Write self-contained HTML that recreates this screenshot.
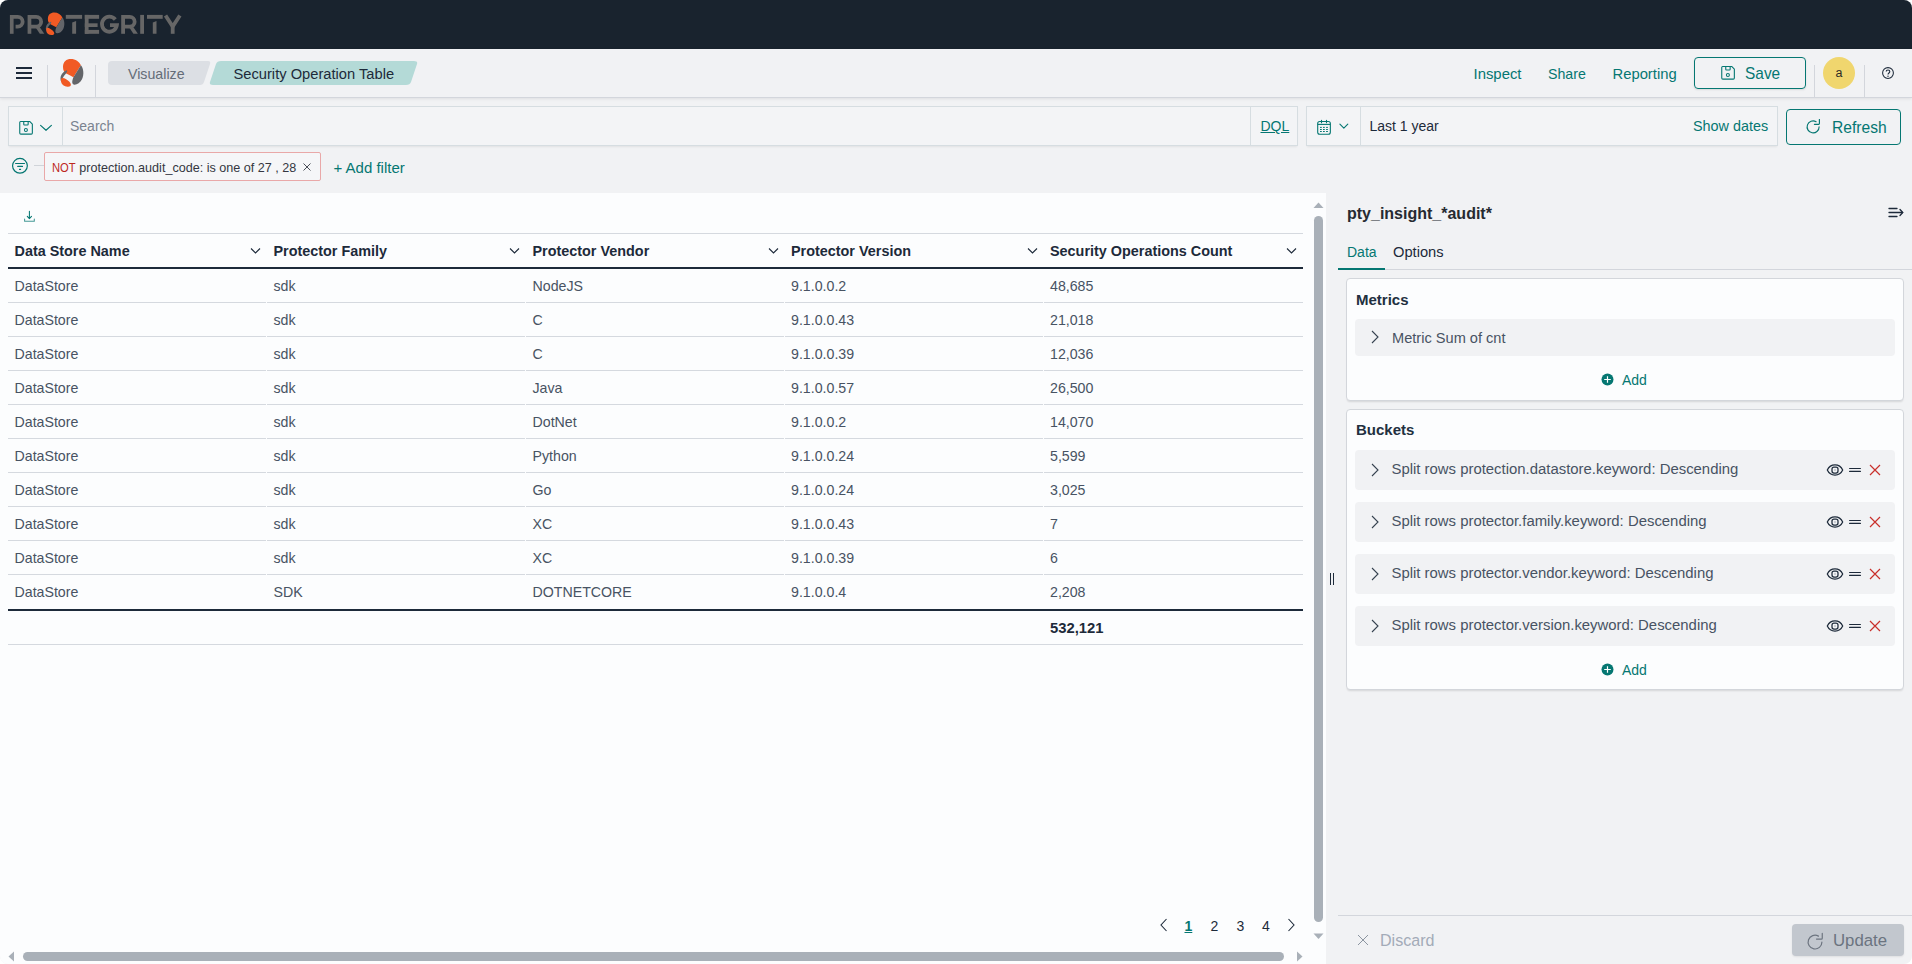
<!DOCTYPE html>
<html><head><meta charset="utf-8"><title>Security Operation Table</title>
<style>
html,body{margin:0;padding:0;}
body{width:1912px;height:964px;overflow:hidden;position:relative;background:#fff;font-family:"Liberation Sans",sans-serif;}
#w{position:absolute;left:0;top:0;width:1912px;height:964px;overflow:hidden;border-radius:8px;background:#f1f2f4;}
#ring{position:absolute;left:0;top:-20px;width:1912px;height:984px;border-radius:0 0 9px 9px;box-shadow:0 0 2px 1px rgba(0,0,0,0.22);pointer-events:none;}
.t{position:absolute;white-space:nowrap;line-height:1;}
svg{display:block;}
</style></head><body><div id="w">
<div style="position:absolute;left:0px;top:0px;width:1912px;height:49px;background:#19232e"></div>
<svg style="position:absolute;left:0px;top:0px;" width="200" height="49" viewBox="0 0 200 49"><g fill="#666666">
<rect x="9.9" y="15" width="3.7" height="18.8"/>
<rect x="27.6" y="15" width="3.7" height="18.8"/>
<rect x="65.8" y="14.9" width="16.3" height="3.9"/>
<path d="M72.2 22.6 L76.1 20.9 V33.8 H72.2Z"/>
<rect x="84.8" y="14.9" width="3.8" height="18.9"/>
<rect x="84.8" y="14.9" width="14.3" height="3.9"/>
<rect x="84.8" y="23.3" width="12.8" height="3.7"/>
<rect x="84.8" y="29.9" width="14.3" height="3.9"/>
<rect x="121.2" y="15" width="3.8" height="18.8"/>
<rect x="140.2" y="14.9" width="3.8" height="18.9"/>
<rect x="147" y="14.9" width="15.7" height="3.9"/>
<path d="M152.8 22.6 L156.5 20.9 V33.8 H152.8Z"/>
<rect x="170.8" y="25" width="3.8" height="8.8"/>
<path d="M35 26.5 H39.3 L44.3 33.8 H39.8Z"/>
<path d="M128.6 26.5 H132.9 L137.9 33.8 H133.4Z"/>
</g>
<g fill="none" stroke="#666666" stroke-width="3.8">
<path d="M11.7 16.9 H17.8 A4.85 4.85 0 0 1 17.8 26.6 H15.6"/>
<path d="M29.5 16.9 H36.3 A4.85 4.85 0 0 1 36.3 26.6 H31"/>
<path d="M123 16.9 H129.8 A4.85 4.85 0 0 1 129.8 26.6 H124.5"/>
<path d="M115.3 19.5 A7.5 7.5 0 1 0 116.9 25.1 H110"/>
<path d="M165.5 15.5 L172.7 26.5 L179.9 15.5" stroke-linejoin="miter"/>
</g>
<g transform="translate(42.2 10.1) scale(0.81)"><path d="M7 11 C7 5.5 10.5 3 14.8 3 C19.5 3 23.3 5.6 24.9 9.2 L17.4 21.2 C15 19.8 12.5 18.8 10.2 17.6 C8.2 16.4 7 14.2 7 11Z" fill="#f15a24"/>
<path d="M24.9 9.2 C27.6 12.2 28.3 18.5 26 23.3 C24.3 26.8 21 28.8 18.4 28.7 C16.3 28.5 15.9 26.4 16.4 24.5 C16.7 23.3 17 22.2 17.4 21.2Z" fill="#636569"/>
<path d="M11 14.3 C11.6 15.3 10.8 16.6 9.4 18.2 C7.6 20.2 6 22.8 5.3 25.8 C4.3 24.2 4.1 21.4 5.3 19 C6.6 16.5 9.3 14.3 11 14.3Z" fill="#636569"/>
<path d="M5.6 22.2 C6.7 21.6 8.2 21.9 9.8 23 C12.3 24.6 14.7 26.2 14.9 28.6 C15 30.3 13.5 31 11.4 30.8 C8.2 30.5 5.6 28.6 5.1 26 C4.8 24.4 5 22.7 5.6 22.2Z" fill="#f15a24"/></g>
</svg></svg>
<div style="position:absolute;left:0px;top:49px;width:1912px;height:48px;background:#f1f2f4;border-bottom:1px solid #d3d6dc;box-shadow:0 1px 3px rgba(0,0,0,0.08)"></div>
<div style="position:absolute;left:16px;top:67px;width:16px;height:2px;background:#1d2a3a"></div>
<div style="position:absolute;left:16px;top:72px;width:16px;height:2px;background:#1d2a3a"></div>
<div style="position:absolute;left:16px;top:77px;width:16px;height:2px;background:#1d2a3a"></div>
<div style="position:absolute;left:47px;top:65px;width:1px;height:32px;background:#d3d6dc"></div>
<div style="position:absolute;left:95px;top:65px;width:1px;height:32px;background:#d3d6dc"></div>
<svg style="position:absolute;left:56px;top:56px;" width="32" height="34" viewBox="0 0 32 34"><path d="M7 11 C7 5.5 10.5 3 14.8 3 C19.5 3 23.3 5.6 24.9 9.2 L17.4 21.2 C15 19.8 12.5 18.8 10.2 17.6 C8.2 16.4 7 14.2 7 11Z" fill="#f15a24"/>
<path d="M24.9 9.2 C27.6 12.2 28.3 18.5 26 23.3 C24.3 26.8 21 28.8 18.4 28.7 C16.3 28.5 15.9 26.4 16.4 24.5 C16.7 23.3 17 22.2 17.4 21.2Z" fill="#636569"/>
<path d="M11 14.3 C11.6 15.3 10.8 16.6 9.4 18.2 C7.6 20.2 6 22.8 5.3 25.8 C4.3 24.2 4.1 21.4 5.3 19 C6.6 16.5 9.3 14.3 11 14.3Z" fill="#636569"/>
<path d="M5.6 22.2 C6.7 21.6 8.2 21.9 9.8 23 C12.3 24.6 14.7 26.2 14.9 28.6 C15 30.3 13.5 31 11.4 30.8 C8.2 30.5 5.6 28.6 5.1 26 C4.8 24.4 5 22.7 5.6 22.2Z" fill="#f15a24"/></svg>
<svg style="position:absolute;left:108px;top:61px;" width="103" height="24" viewBox="0 0 103 24"><path d="M4 0 H100 Q103 0 102 3 L96 21 Q95 24 92 24 H4 Q0 24 0 20 V4 Q0 0 4 0Z" fill="#dcdfe4"/></svg>
<div class="t" style="left:128.0px;top:66.8px;font-size:14.2px;color:#646c78;font-weight:400;">Visualize</div>
<svg style="position:absolute;left:209px;top:61px;" width="210" height="24" viewBox="0 0 210 24"><path d="M12 0 H205 Q209 0 208 3 L202 21 Q201 24 197 24 H4 Q0 24 1 21 L7 3 Q8 0 12 0Z" fill="#b4dad7"/></svg>
<div class="t" style="left:233.5px;top:66.6px;font-size:14.7px;color:#1d2a3a;font-weight:400;">Security Operation Table</div>
<div class="t" style="left:1473.5px;top:67.1px;font-size:14.9px;color:#057772;font-weight:400;">Inspect</div>
<div class="t" style="left:1548.0px;top:67.0px;font-size:14.2px;color:#057772;font-weight:400;">Share</div>
<div class="t" style="left:1612.5px;top:66.5px;font-size:14.8px;color:#057772;font-weight:400;">Reporting</div>
<div style="position:absolute;left:1694px;top:57px;width:112px;height:32px;box-sizing:border-box;border:1.5px solid #057772;border-radius:4px;box-shadow:0 1px 2px rgba(0,0,0,0.1)"></div>
<svg style="position:absolute;left:1720px;top:65px;" width="16" height="16" viewBox="0 0 16 16"><path d="M2.6 1.55 H11.9 L14.35 4.1 V13.1 Q14.35 14.15 13.3 14.15 H2.8 Q1.75 14.15 1.75 13.1 V2.6 Q1.75 1.55 2.6 1.55Z M5.75 1.55 V4.3 Q5.75 5.05 6.5 5.05 H9.4 Q10.15 5.05 10.15 4.3 V1.55" fill="none" stroke="#057772" stroke-width="1.1" stroke-linejoin="round"/><circle cx="7.9" cy="9.9" r="1.5" fill="none" stroke="#057772" stroke-width="1.05"/></svg>
<div class="t" style="left:1744.5px;top:65.5px;font-size:16.6px;color:#057772;font-weight:400;transform:scaleX(0.93);transform-origin:0 0;">Save</div>
<div style="position:absolute;left:1814px;top:65px;width:1px;height:32px;background:#d3d6dc"></div>
<div style="position:absolute;left:1823px;top:57px;width:32px;height:32px;background:#f0d66e;border-radius:50%"></div>
<div class="t" style="left:1835.5px;top:67.4px;font-size:12.5px;color:#2b2b26;font-weight:400;">a</div>
<div style="position:absolute;left:1864px;top:65px;width:1px;height:32px;background:#d3d6dc"></div>
<svg style="position:absolute;left:1881px;top:66px;" width="14" height="14" viewBox="0 0 14 14"><circle cx="7" cy="7" r="5.4" fill="none" stroke="#1d2a3a" stroke-width="1.05"/><path d="M5.2 5.6 C5.2 3.4 8.8 3.4 8.8 5.6 C8.8 7 7 7 7 8.6" fill="none" stroke="#1d2a3a" stroke-width="1.1"/><circle cx="7" cy="10.3" r="0.7" fill="#1d2a3a"/></svg>
<div style="position:absolute;left:8px;top:106px;width:1290px;height:40px;box-sizing:border-box;background:#f3f4f6;border:1px solid #d6dde1;box-shadow:0 2px 2px -1px rgba(0,0,0,0.07)"></div>
<div style="position:absolute;left:62px;top:107px;width:1px;height:38px;background:#d6dde1"></div>
<svg style="position:absolute;left:18px;top:120px;" width="16" height="16" viewBox="0 0 16 16"><path d="M2.6 1.55 H11.9 L14.35 4.1 V13.1 Q14.35 14.15 13.3 14.15 H2.8 Q1.75 14.15 1.75 13.1 V2.6 Q1.75 1.55 2.6 1.55Z M5.75 1.55 V4.3 Q5.75 5.05 6.5 5.05 H9.4 Q10.15 5.05 10.15 4.3 V1.55" fill="none" stroke="#057772" stroke-width="1.1" stroke-linejoin="round"/><circle cx="7.9" cy="9.9" r="1.5" fill="none" stroke="#057772" stroke-width="1.05"/></svg>
<svg style="position:absolute;left:39px;top:123px;" width="14" height="10" viewBox="0 0 14 10"><path d="M1.6 2.4 L7 7.3 L12.4 2.4" fill="none" stroke="#057772" stroke-width="1.15" stroke-linecap="round" stroke-linejoin="round"/></svg>
<div class="t" style="left:70.0px;top:119.1px;font-size:14px;color:#7a8390;font-weight:400;">Search</div>
<div style="position:absolute;left:1250px;top:107px;width:1px;height:38px;background:#d6dde1"></div>
<div class="t" style="left:1260.5px;top:118.9px;font-size:14px;color:#057772;font-weight:400;text-decoration:underline;">DQL</div>
<div style="position:absolute;left:1306px;top:106px;width:472px;height:40px;box-sizing:border-box;background:#f3f4f6;border:1px solid #d6dde1;box-shadow:0 2px 2px -1px rgba(0,0,0,0.07)"></div>
<div style="position:absolute;left:1360px;top:107px;width:1px;height:38px;background:#d6dde1"></div>
<svg style="position:absolute;left:1316px;top:119px;" width="16" height="17" viewBox="0 0 16 17"><rect x="1.7" y="2.45" width="12.65" height="12.8" rx="2" fill="none" stroke="#057772" stroke-width="1.1"/><path d="M1.7 5.4 H14.35" stroke="#057772" stroke-width="1.1"/><path d="M5.5 1.2 V3.7 M10.5 1.2 V3.7" stroke="#057772" stroke-width="1.1" stroke-linecap="round"/><path d="M4.4 8.4 H5.4 M7.4 8.4 H8.4 M10.5 8.4 H11.5 M4.4 10.5 H5.4 M7.4 10.5 H8.4 M10.5 10.5 H11.5 M4.4 12.5 H5.4 M7.4 12.5 H8.4 M10.5 12.5 H11.5" stroke="#057772" stroke-width="1" stroke-linecap="round"/></svg>
<svg style="position:absolute;left:1338px;top:122px;" width="12" height="8" viewBox="0 0 12 8"><path d="M1.9 2.2 L5.85 6.1 L9.8 2.2" fill="none" stroke="#057772" stroke-width="1.1" stroke-linecap="round" stroke-linejoin="round"/></svg>
<div class="t" style="left:1369.5px;top:118.9px;font-size:14px;color:#1d2a3a;font-weight:400;">Last 1 year</div>
<div class="t" style="left:1693.0px;top:118.6px;font-size:14.4px;color:#057772;font-weight:400;">Show dates</div>
<div style="position:absolute;left:1786px;top:109px;width:115px;height:36px;box-sizing:border-box;border:1.5px solid #057772;border-radius:4px"></div>
<svg style="position:absolute;left:1805px;top:119px;" width="17" height="17" viewBox="0 0 17 17"><path d="M11.1 2.7 A6 6 0 1 0 14.1 7.9" fill="none" stroke="#057772" stroke-width="1.15" stroke-linecap="round"/><path d="M14.4 0.4 V4.5 Q14.4 5.3 13.6 5.3 H9.4" fill="none" stroke="#057772" stroke-width="1.15" stroke-linecap="round"/></svg>
<div class="t" style="left:1832.0px;top:119.6px;font-size:16.6px;color:#057772;font-weight:400;transform:scaleX(0.94);transform-origin:0 0;">Refresh</div>
<svg style="position:absolute;left:11px;top:157px;" width="18" height="18" viewBox="0 0 18 18"><circle cx="8.95" cy="8.8" r="7.4" fill="none" stroke="#057772" stroke-width="1.2"/><path d="M4.6 6.5 H13.5 M6.7 9.4 H11.5 M8.5 12.4 H9.6" stroke="#057772" stroke-width="1.1" stroke-linecap="round"/></svg>
<div style="position:absolute;left:34px;top:165px;width:10px;height:1px;background:#d0d4d9"></div>
<div style="position:absolute;left:44px;top:152px;width:277px;height:29px;box-sizing:border-box;background:#f5f6f8;border:1px solid #e9a8a8;border-radius:2px"></div>
<div class="t" style="left:52.0px;top:160.8px;font-size:13px;color:#bd271e;font-weight:400;transform:scaleX(0.86);transform-origin:0 0;">NOT</div>
<div class="t" style="left:79.3px;top:161.8px;font-size:12.6px;color:#343741;font-weight:400;">protection.audit_code: is one of 27 , 28</div>
<svg style="position:absolute;left:301px;top:161px;" width="12" height="12" viewBox="0 0 12 12"><path d="M2.5 2.5 L9.5 9.5 M9.5 2.5 L2.5 9.5" stroke="#4a4f58" stroke-width="1"/></svg>
<div class="t" style="left:333.5px;top:159.7px;font-size:15px;color:#057772;font-weight:400;">+ Add filter</div>
<div style="position:absolute;left:0px;top:193px;width:1326px;height:771px;background:#fcfdfe"></div>
<svg style="position:absolute;left:22px;top:210px;" width="14" height="14" viewBox="0 0 14 14"><path d="M7.4 1.2 V8.6 M5.3 6.4 L7.4 8.6 L9.5 6.4" fill="none" stroke="#057772" stroke-width="1.05" stroke-linecap="round" stroke-linejoin="round"/><path d="M2.6 9 V11.3 H12.3 V9" fill="none" stroke="#057772" stroke-width="1.05" stroke-opacity="0.75" stroke-linecap="round" stroke-linejoin="round"/></svg>
<div style="position:absolute;left:8px;top:233px;width:1295px;height:1px;background:#d5d9df"></div>
<div class="t" style="left:14.5px;top:243.8px;font-size:14.4px;color:#1d2a3a;font-weight:700;">Data Store Name</div>
<div class="t" style="left:273.5px;top:243.8px;font-size:14.4px;color:#1d2a3a;font-weight:700;">Protector Family</div>
<div class="t" style="left:532.5px;top:243.8px;font-size:14.4px;color:#1d2a3a;font-weight:700;">Protector Vendor</div>
<div class="t" style="left:791.0px;top:243.8px;font-size:14.4px;color:#1d2a3a;font-weight:700;">Protector Version</div>
<div class="t" style="left:1050.0px;top:243.8px;font-size:14.4px;color:#1d2a3a;font-weight:700;">Security Operations Count</div>
<svg style="position:absolute;left:250px;top:247px;" width="11" height="8" viewBox="0 0 11 8"><path d="M1 1.5 L5.5 6 L10 1.5" fill="none" stroke="#1d2a3a" stroke-width="1.1"/></svg>
<svg style="position:absolute;left:509px;top:247px;" width="11" height="8" viewBox="0 0 11 8"><path d="M1 1.5 L5.5 6 L10 1.5" fill="none" stroke="#1d2a3a" stroke-width="1.1"/></svg>
<svg style="position:absolute;left:768px;top:247px;" width="11" height="8" viewBox="0 0 11 8"><path d="M1 1.5 L5.5 6 L10 1.5" fill="none" stroke="#1d2a3a" stroke-width="1.1"/></svg>
<svg style="position:absolute;left:1027px;top:247px;" width="11" height="8" viewBox="0 0 11 8"><path d="M1 1.5 L5.5 6 L10 1.5" fill="none" stroke="#1d2a3a" stroke-width="1.1"/></svg>
<svg style="position:absolute;left:1286px;top:247px;" width="11" height="8" viewBox="0 0 11 8"><path d="M1 1.5 L5.5 6 L10 1.5" fill="none" stroke="#1d2a3a" stroke-width="1.1"/></svg>
<div style="position:absolute;left:8px;top:267px;width:1295px;height:2px;background:#1d2a3a"></div>
<div class="t" style="left:14.5px;top:279.0px;font-size:14.2px;color:#485363;font-weight:400;">DataStore</div>
<div class="t" style="left:273.5px;top:279.0px;font-size:14.2px;color:#485363;font-weight:400;">sdk</div>
<div class="t" style="left:532.5px;top:279.0px;font-size:14.2px;color:#485363;font-weight:400;">NodeJS</div>
<div class="t" style="left:791.0px;top:279.0px;font-size:14.2px;color:#485363;font-weight:400;">9.1.0.0.2</div>
<div class="t" style="left:1050.0px;top:279.0px;font-size:14.2px;color:#485363;font-weight:400;">48,685</div>
<div style="position:absolute;left:8px;top:302px;width:258px;height:1px;background:#d5d9df"></div>
<div style="position:absolute;left:267px;top:302px;width:258px;height:1px;background:#d5d9df"></div>
<div style="position:absolute;left:526px;top:302px;width:258px;height:1px;background:#d5d9df"></div>
<div style="position:absolute;left:785px;top:302px;width:258px;height:1px;background:#d5d9df"></div>
<div style="position:absolute;left:1044px;top:302px;width:259px;height:1px;background:#d5d9df"></div>
<div class="t" style="left:14.5px;top:313.0px;font-size:14.2px;color:#485363;font-weight:400;">DataStore</div>
<div class="t" style="left:273.5px;top:313.0px;font-size:14.2px;color:#485363;font-weight:400;">sdk</div>
<div class="t" style="left:532.5px;top:313.0px;font-size:14.2px;color:#485363;font-weight:400;">C</div>
<div class="t" style="left:791.0px;top:313.0px;font-size:14.2px;color:#485363;font-weight:400;">9.1.0.0.43</div>
<div class="t" style="left:1050.0px;top:313.0px;font-size:14.2px;color:#485363;font-weight:400;">21,018</div>
<div style="position:absolute;left:8px;top:336px;width:258px;height:1px;background:#d5d9df"></div>
<div style="position:absolute;left:267px;top:336px;width:258px;height:1px;background:#d5d9df"></div>
<div style="position:absolute;left:526px;top:336px;width:258px;height:1px;background:#d5d9df"></div>
<div style="position:absolute;left:785px;top:336px;width:258px;height:1px;background:#d5d9df"></div>
<div style="position:absolute;left:1044px;top:336px;width:259px;height:1px;background:#d5d9df"></div>
<div class="t" style="left:14.5px;top:347.0px;font-size:14.2px;color:#485363;font-weight:400;">DataStore</div>
<div class="t" style="left:273.5px;top:347.0px;font-size:14.2px;color:#485363;font-weight:400;">sdk</div>
<div class="t" style="left:532.5px;top:347.0px;font-size:14.2px;color:#485363;font-weight:400;">C</div>
<div class="t" style="left:791.0px;top:347.0px;font-size:14.2px;color:#485363;font-weight:400;">9.1.0.0.39</div>
<div class="t" style="left:1050.0px;top:347.0px;font-size:14.2px;color:#485363;font-weight:400;">12,036</div>
<div style="position:absolute;left:8px;top:370px;width:258px;height:1px;background:#d5d9df"></div>
<div style="position:absolute;left:267px;top:370px;width:258px;height:1px;background:#d5d9df"></div>
<div style="position:absolute;left:526px;top:370px;width:258px;height:1px;background:#d5d9df"></div>
<div style="position:absolute;left:785px;top:370px;width:258px;height:1px;background:#d5d9df"></div>
<div style="position:absolute;left:1044px;top:370px;width:259px;height:1px;background:#d5d9df"></div>
<div class="t" style="left:14.5px;top:381.0px;font-size:14.2px;color:#485363;font-weight:400;">DataStore</div>
<div class="t" style="left:273.5px;top:381.0px;font-size:14.2px;color:#485363;font-weight:400;">sdk</div>
<div class="t" style="left:532.5px;top:381.0px;font-size:14.2px;color:#485363;font-weight:400;">Java</div>
<div class="t" style="left:791.0px;top:381.0px;font-size:14.2px;color:#485363;font-weight:400;">9.1.0.0.57</div>
<div class="t" style="left:1050.0px;top:381.0px;font-size:14.2px;color:#485363;font-weight:400;">26,500</div>
<div style="position:absolute;left:8px;top:404px;width:258px;height:1px;background:#d5d9df"></div>
<div style="position:absolute;left:267px;top:404px;width:258px;height:1px;background:#d5d9df"></div>
<div style="position:absolute;left:526px;top:404px;width:258px;height:1px;background:#d5d9df"></div>
<div style="position:absolute;left:785px;top:404px;width:258px;height:1px;background:#d5d9df"></div>
<div style="position:absolute;left:1044px;top:404px;width:259px;height:1px;background:#d5d9df"></div>
<div class="t" style="left:14.5px;top:415.0px;font-size:14.2px;color:#485363;font-weight:400;">DataStore</div>
<div class="t" style="left:273.5px;top:415.0px;font-size:14.2px;color:#485363;font-weight:400;">sdk</div>
<div class="t" style="left:532.5px;top:415.0px;font-size:14.2px;color:#485363;font-weight:400;">DotNet</div>
<div class="t" style="left:791.0px;top:415.0px;font-size:14.2px;color:#485363;font-weight:400;">9.1.0.0.2</div>
<div class="t" style="left:1050.0px;top:415.0px;font-size:14.2px;color:#485363;font-weight:400;">14,070</div>
<div style="position:absolute;left:8px;top:438px;width:258px;height:1px;background:#d5d9df"></div>
<div style="position:absolute;left:267px;top:438px;width:258px;height:1px;background:#d5d9df"></div>
<div style="position:absolute;left:526px;top:438px;width:258px;height:1px;background:#d5d9df"></div>
<div style="position:absolute;left:785px;top:438px;width:258px;height:1px;background:#d5d9df"></div>
<div style="position:absolute;left:1044px;top:438px;width:259px;height:1px;background:#d5d9df"></div>
<div class="t" style="left:14.5px;top:449.0px;font-size:14.2px;color:#485363;font-weight:400;">DataStore</div>
<div class="t" style="left:273.5px;top:449.0px;font-size:14.2px;color:#485363;font-weight:400;">sdk</div>
<div class="t" style="left:532.5px;top:449.0px;font-size:14.2px;color:#485363;font-weight:400;">Python</div>
<div class="t" style="left:791.0px;top:449.0px;font-size:14.2px;color:#485363;font-weight:400;">9.1.0.0.24</div>
<div class="t" style="left:1050.0px;top:449.0px;font-size:14.2px;color:#485363;font-weight:400;">5,599</div>
<div style="position:absolute;left:8px;top:472px;width:258px;height:1px;background:#d5d9df"></div>
<div style="position:absolute;left:267px;top:472px;width:258px;height:1px;background:#d5d9df"></div>
<div style="position:absolute;left:526px;top:472px;width:258px;height:1px;background:#d5d9df"></div>
<div style="position:absolute;left:785px;top:472px;width:258px;height:1px;background:#d5d9df"></div>
<div style="position:absolute;left:1044px;top:472px;width:259px;height:1px;background:#d5d9df"></div>
<div class="t" style="left:14.5px;top:483.0px;font-size:14.2px;color:#485363;font-weight:400;">DataStore</div>
<div class="t" style="left:273.5px;top:483.0px;font-size:14.2px;color:#485363;font-weight:400;">sdk</div>
<div class="t" style="left:532.5px;top:483.0px;font-size:14.2px;color:#485363;font-weight:400;">Go</div>
<div class="t" style="left:791.0px;top:483.0px;font-size:14.2px;color:#485363;font-weight:400;">9.1.0.0.24</div>
<div class="t" style="left:1050.0px;top:483.0px;font-size:14.2px;color:#485363;font-weight:400;">3,025</div>
<div style="position:absolute;left:8px;top:506px;width:258px;height:1px;background:#d5d9df"></div>
<div style="position:absolute;left:267px;top:506px;width:258px;height:1px;background:#d5d9df"></div>
<div style="position:absolute;left:526px;top:506px;width:258px;height:1px;background:#d5d9df"></div>
<div style="position:absolute;left:785px;top:506px;width:258px;height:1px;background:#d5d9df"></div>
<div style="position:absolute;left:1044px;top:506px;width:259px;height:1px;background:#d5d9df"></div>
<div class="t" style="left:14.5px;top:517.0px;font-size:14.2px;color:#485363;font-weight:400;">DataStore</div>
<div class="t" style="left:273.5px;top:517.0px;font-size:14.2px;color:#485363;font-weight:400;">sdk</div>
<div class="t" style="left:532.5px;top:517.0px;font-size:14.2px;color:#485363;font-weight:400;">XC</div>
<div class="t" style="left:791.0px;top:517.0px;font-size:14.2px;color:#485363;font-weight:400;">9.1.0.0.43</div>
<div class="t" style="left:1050.0px;top:517.0px;font-size:14.2px;color:#485363;font-weight:400;">7</div>
<div style="position:absolute;left:8px;top:540px;width:258px;height:1px;background:#d5d9df"></div>
<div style="position:absolute;left:267px;top:540px;width:258px;height:1px;background:#d5d9df"></div>
<div style="position:absolute;left:526px;top:540px;width:258px;height:1px;background:#d5d9df"></div>
<div style="position:absolute;left:785px;top:540px;width:258px;height:1px;background:#d5d9df"></div>
<div style="position:absolute;left:1044px;top:540px;width:259px;height:1px;background:#d5d9df"></div>
<div class="t" style="left:14.5px;top:551.0px;font-size:14.2px;color:#485363;font-weight:400;">DataStore</div>
<div class="t" style="left:273.5px;top:551.0px;font-size:14.2px;color:#485363;font-weight:400;">sdk</div>
<div class="t" style="left:532.5px;top:551.0px;font-size:14.2px;color:#485363;font-weight:400;">XC</div>
<div class="t" style="left:791.0px;top:551.0px;font-size:14.2px;color:#485363;font-weight:400;">9.1.0.0.39</div>
<div class="t" style="left:1050.0px;top:551.0px;font-size:14.2px;color:#485363;font-weight:400;">6</div>
<div style="position:absolute;left:8px;top:574px;width:258px;height:1px;background:#d5d9df"></div>
<div style="position:absolute;left:267px;top:574px;width:258px;height:1px;background:#d5d9df"></div>
<div style="position:absolute;left:526px;top:574px;width:258px;height:1px;background:#d5d9df"></div>
<div style="position:absolute;left:785px;top:574px;width:258px;height:1px;background:#d5d9df"></div>
<div style="position:absolute;left:1044px;top:574px;width:259px;height:1px;background:#d5d9df"></div>
<div class="t" style="left:14.5px;top:585.0px;font-size:14.2px;color:#485363;font-weight:400;">DataStore</div>
<div class="t" style="left:273.5px;top:585.0px;font-size:14.2px;color:#485363;font-weight:400;">SDK</div>
<div class="t" style="left:532.5px;top:585.0px;font-size:14.2px;color:#485363;font-weight:400;">DOTNETCORE</div>
<div class="t" style="left:791.0px;top:585.0px;font-size:14.2px;color:#485363;font-weight:400;">9.1.0.0.4</div>
<div class="t" style="left:1050.0px;top:585.0px;font-size:14.2px;color:#485363;font-weight:400;">2,208</div>
<div style="position:absolute;left:8px;top:609px;width:1295px;height:2px;background:#1d2a3a"></div>
<div class="t" style="left:1050.0px;top:620.8px;font-size:14.8px;color:#1d2a3a;font-weight:700;">532,121</div>
<div style="position:absolute;left:8px;top:644px;width:1295px;height:1px;background:#d5d9df"></div>
<svg style="position:absolute;left:1159px;top:917px;" width="10" height="16" viewBox="0 0 10 16"><path d="M7.5 2 L2 8 L7.5 14" fill="none" stroke="#1d2a3a" stroke-width="1.1"/></svg>
<div class="t" style="left:1184.5px;top:918.8px;font-size:14px;color:#057772;font-weight:700;text-decoration:underline;">1</div>
<div class="t" style="left:1210.5px;top:918.8px;font-size:14px;color:#1d2a3a;font-weight:400;">2</div>
<div class="t" style="left:1236.5px;top:918.8px;font-size:14px;color:#1d2a3a;font-weight:400;">3</div>
<div class="t" style="left:1262.0px;top:918.8px;font-size:14px;color:#1d2a3a;font-weight:400;">4</div>
<svg style="position:absolute;left:1286px;top:917px;" width="10" height="16" viewBox="0 0 10 16"><path d="M2.5 2 L8 8 L2.5 14" fill="none" stroke="#1d2a3a" stroke-width="1.1"/></svg>
<svg style="position:absolute;left:1313px;top:202px;" width="11" height="7" viewBox="0 0 11 7"><path d="M0.5 6 L5.5 0.5 L10.5 6Z" fill="#a9b0b8"/></svg>
<div style="position:absolute;left:1314px;top:216px;width:9px;height:706px;background:#a9b0b8;border-radius:4.5px"></div>
<svg style="position:absolute;left:1313px;top:933px;" width="11" height="7" viewBox="0 0 11 7"><path d="M0.5 0.5 L5.5 6 L10.5 0.5Z" fill="#a9b0b8"/></svg>
<svg style="position:absolute;left:8px;top:951px;" width="7" height="11" viewBox="0 0 7 11"><path d="M6 0.5 L0.5 5.5 L6 10.5Z" fill="#a9b0b8"/></svg>
<div style="position:absolute;left:23px;top:952px;width:1261px;height:9px;background:#a9b0b8;border-radius:4.5px"></div>
<svg style="position:absolute;left:1296px;top:951px;" width="7" height="11" viewBox="0 0 7 11"><path d="M1 0.5 L6.5 5.5 L1 10.5Z" fill="#a9b0b8"/></svg>
<div style="position:absolute;left:1330px;top:573px;width:1px;height:12px;background:#1d2a3a"></div>
<div style="position:absolute;left:1333px;top:573px;width:1px;height:12px;background:#1d2a3a"></div>
<div class="t" style="left:1347.0px;top:206.1px;font-size:16px;color:#262a31;font-weight:700;">pty_insight_*audit*</div>
<svg style="position:absolute;left:1886px;top:206px;" width="18" height="13" viewBox="0 0 18 13"><path d="M3 2.5 H11 M3 6.5 H16.5 M3 10.5 H11" stroke="#1d2a3a" stroke-width="1.3" stroke-linecap="round"/><path d="M14 3.5 L16.8 6.5 L14 9.5" fill="none" stroke="#1d2a3a" stroke-width="1.3" stroke-linecap="round"/></svg>
<div class="t" style="left:1347.0px;top:244.8px;font-size:14px;color:#057772;font-weight:400;">Data</div>
<div class="t" style="left:1393.0px;top:245.1px;font-size:14.7px;color:#1d2a3a;font-weight:400;">Options</div>
<div style="position:absolute;left:1338px;top:269px;width:574px;height:1px;background:#d3d6dc"></div>
<div style="position:absolute;left:1338px;top:268px;width:47px;height:2px;background:#057772"></div>
<div style="position:absolute;left:1346px;top:278px;width:558px;height:123px;box-sizing:border-box;background:#fcfdfe;border:1px solid #d3d6db;border-radius:4px;box-shadow:0 2px 2px -1px rgba(0,0,0,0.12)"></div>
<div class="t" style="left:1356.0px;top:291.5px;font-size:15px;color:#223040;font-weight:700;">Metrics</div>
<div style="position:absolute;left:1355px;top:319px;width:540px;height:37px;background:#f1f2f4;border-radius:4px"></div>
<svg style="position:absolute;left:1369px;top:329px;" width="12" height="16" viewBox="0 0 12 16"><path d="M3 2 L9 8 L3 14" fill="none" stroke="#364250" stroke-width="1.1"/></svg>
<div class="t" style="left:1392.0px;top:330.9px;font-size:14.6px;color:#485363;font-weight:400;">Metric Sum of cnt</div>
<svg style="position:absolute;left:1601px;top:373px;" width="13" height="13" viewBox="0 0 13 13"><circle cx="6.5" cy="6.5" r="6" fill="#057772"/><path d="M6.5 3.2 V9.8 M3.2 6.5 H9.8" stroke="#fff" stroke-width="1.2"/></svg>
<div class="t" style="left:1622.0px;top:373.1px;font-size:14px;color:#057772;font-weight:400;">Add</div>
<div style="position:absolute;left:1346px;top:409px;width:558px;height:281px;box-sizing:border-box;background:#fcfdfe;border:1px solid #d3d6db;border-radius:4px;box-shadow:0 2px 2px -1px rgba(0,0,0,0.12)"></div>
<div class="t" style="left:1356.0px;top:422.2px;font-size:15px;color:#223040;font-weight:700;">Buckets</div>
<div style="position:absolute;left:1355px;top:450px;width:540px;height:40px;background:#f1f2f4;border-radius:4px"></div>
<svg style="position:absolute;left:1369px;top:462px;" width="12" height="16" viewBox="0 0 12 16"><path d="M3 2 L9 8 L3 14" fill="none" stroke="#364250" stroke-width="1.1"/></svg>
<div class="t" style="left:1391.5px;top:462.2px;font-size:14.9px;color:#485363;font-weight:400;">Split rows protection.datastore.keyword: Descending</div>
<svg style="position:absolute;left:1826px;top:461px;" width="18" height="18" viewBox="0 0 18 18"><path d="M1.3 9 C4.5 2.2 13.5 2.2 16.7 9 C13.5 15.8 4.5 15.8 1.3 9Z" fill="none" stroke="#1d2a3a" stroke-width="1.25" stroke-linejoin="round"/><rect x="6" y="6" width="6" height="6" rx="2" fill="none" stroke="#1d2a3a" stroke-width="1.25"/><rect x="8.4" y="8.4" width="1.2" height="1.2" fill="#8a949e"/></svg>
<svg style="position:absolute;left:1848px;top:466px;" width="14" height="8" viewBox="0 0 14 8"><path d="M1.6 2.5 H12.4 M1.6 5.4 H12.4" stroke="#1d2a3a" stroke-width="1.2" stroke-linecap="round"/></svg>
<svg style="position:absolute;left:1869px;top:464px;" width="12" height="12" viewBox="0 0 12 12"><path d="M1 1 L11 11 M11 1 L1 11" stroke="#c9302c" stroke-width="1.2"/></svg>
<div style="position:absolute;left:1355px;top:502px;width:540px;height:40px;background:#f1f2f4;border-radius:4px"></div>
<svg style="position:absolute;left:1369px;top:514px;" width="12" height="16" viewBox="0 0 12 16"><path d="M3 2 L9 8 L3 14" fill="none" stroke="#364250" stroke-width="1.1"/></svg>
<div class="t" style="left:1391.5px;top:514.2px;font-size:14.9px;color:#485363;font-weight:400;">Split rows protector.family.keyword: Descending</div>
<svg style="position:absolute;left:1826px;top:513px;" width="18" height="18" viewBox="0 0 18 18"><path d="M1.3 9 C4.5 2.2 13.5 2.2 16.7 9 C13.5 15.8 4.5 15.8 1.3 9Z" fill="none" stroke="#1d2a3a" stroke-width="1.25" stroke-linejoin="round"/><rect x="6" y="6" width="6" height="6" rx="2" fill="none" stroke="#1d2a3a" stroke-width="1.25"/><rect x="8.4" y="8.4" width="1.2" height="1.2" fill="#8a949e"/></svg>
<svg style="position:absolute;left:1848px;top:518px;" width="14" height="8" viewBox="0 0 14 8"><path d="M1.6 2.5 H12.4 M1.6 5.4 H12.4" stroke="#1d2a3a" stroke-width="1.2" stroke-linecap="round"/></svg>
<svg style="position:absolute;left:1869px;top:516px;" width="12" height="12" viewBox="0 0 12 12"><path d="M1 1 L11 11 M11 1 L1 11" stroke="#c9302c" stroke-width="1.2"/></svg>
<div style="position:absolute;left:1355px;top:554px;width:540px;height:40px;background:#f1f2f4;border-radius:4px"></div>
<svg style="position:absolute;left:1369px;top:566px;" width="12" height="16" viewBox="0 0 12 16"><path d="M3 2 L9 8 L3 14" fill="none" stroke="#364250" stroke-width="1.1"/></svg>
<div class="t" style="left:1391.5px;top:566.2px;font-size:14.9px;color:#485363;font-weight:400;">Split rows protector.vendor.keyword: Descending</div>
<svg style="position:absolute;left:1826px;top:565px;" width="18" height="18" viewBox="0 0 18 18"><path d="M1.3 9 C4.5 2.2 13.5 2.2 16.7 9 C13.5 15.8 4.5 15.8 1.3 9Z" fill="none" stroke="#1d2a3a" stroke-width="1.25" stroke-linejoin="round"/><rect x="6" y="6" width="6" height="6" rx="2" fill="none" stroke="#1d2a3a" stroke-width="1.25"/><rect x="8.4" y="8.4" width="1.2" height="1.2" fill="#8a949e"/></svg>
<svg style="position:absolute;left:1848px;top:570px;" width="14" height="8" viewBox="0 0 14 8"><path d="M1.6 2.5 H12.4 M1.6 5.4 H12.4" stroke="#1d2a3a" stroke-width="1.2" stroke-linecap="round"/></svg>
<svg style="position:absolute;left:1869px;top:568px;" width="12" height="12" viewBox="0 0 12 12"><path d="M1 1 L11 11 M11 1 L1 11" stroke="#c9302c" stroke-width="1.2"/></svg>
<div style="position:absolute;left:1355px;top:606px;width:540px;height:40px;background:#f1f2f4;border-radius:4px"></div>
<svg style="position:absolute;left:1369px;top:618px;" width="12" height="16" viewBox="0 0 12 16"><path d="M3 2 L9 8 L3 14" fill="none" stroke="#364250" stroke-width="1.1"/></svg>
<div class="t" style="left:1391.5px;top:618.2px;font-size:14.9px;color:#485363;font-weight:400;">Split rows protector.version.keyword: Descending</div>
<svg style="position:absolute;left:1826px;top:617px;" width="18" height="18" viewBox="0 0 18 18"><path d="M1.3 9 C4.5 2.2 13.5 2.2 16.7 9 C13.5 15.8 4.5 15.8 1.3 9Z" fill="none" stroke="#1d2a3a" stroke-width="1.25" stroke-linejoin="round"/><rect x="6" y="6" width="6" height="6" rx="2" fill="none" stroke="#1d2a3a" stroke-width="1.25"/><rect x="8.4" y="8.4" width="1.2" height="1.2" fill="#8a949e"/></svg>
<svg style="position:absolute;left:1848px;top:622px;" width="14" height="8" viewBox="0 0 14 8"><path d="M1.6 2.5 H12.4 M1.6 5.4 H12.4" stroke="#1d2a3a" stroke-width="1.2" stroke-linecap="round"/></svg>
<svg style="position:absolute;left:1869px;top:620px;" width="12" height="12" viewBox="0 0 12 12"><path d="M1 1 L11 11 M11 1 L1 11" stroke="#c9302c" stroke-width="1.2"/></svg>
<svg style="position:absolute;left:1601px;top:663px;" width="13" height="13" viewBox="0 0 13 13"><circle cx="6.5" cy="6.5" r="6" fill="#057772"/><path d="M6.5 3.2 V9.8 M3.2 6.5 H9.8" stroke="#fff" stroke-width="1.2"/></svg>
<div class="t" style="left:1622.0px;top:662.9px;font-size:14px;color:#057772;font-weight:400;">Add</div>
<div style="position:absolute;left:1338px;top:915px;width:574px;height:1px;background:#d3d6dc"></div>
<svg style="position:absolute;left:1357px;top:934px;" width="12" height="12" viewBox="0 0 12 12"><path d="M1 1 L11 11 M11 1 L1 11" stroke="#8c95a0" stroke-width="1"/></svg>
<div class="t" style="left:1380.0px;top:932.3px;font-size:17.4px;color:#a3abb8;font-weight:400;transform:scaleX(0.925);transform-origin:0 0;">Discard</div>
<div style="position:absolute;left:1792px;top:924px;width:112px;height:32px;background:#c2c7ce;border-radius:4px;box-shadow:0 1px 2px rgba(0,0,0,0.08)"></div>
<svg style="position:absolute;left:1806px;top:932px;" width="19" height="19" viewBox="0 0 19 19"><g transform="translate(-0.3 1) scale(1.15)"><path d="M11.1 2.7 A6 6 0 1 0 14.1 7.9" fill="none" stroke="#6d7580" stroke-width="1.05" stroke-linecap="round"/><path d="M14.4 0.4 V4.5 Q14.4 5.3 13.6 5.3 H9.4" fill="none" stroke="#6d7580" stroke-width="1.05" stroke-linecap="round"/></g></svg>
<div class="t" style="left:1833.0px;top:931.5px;font-size:17.4px;color:#6b7480;font-weight:400;transform:scaleX(0.965);transform-origin:0 0;">Update</div>
</div></body></html>
